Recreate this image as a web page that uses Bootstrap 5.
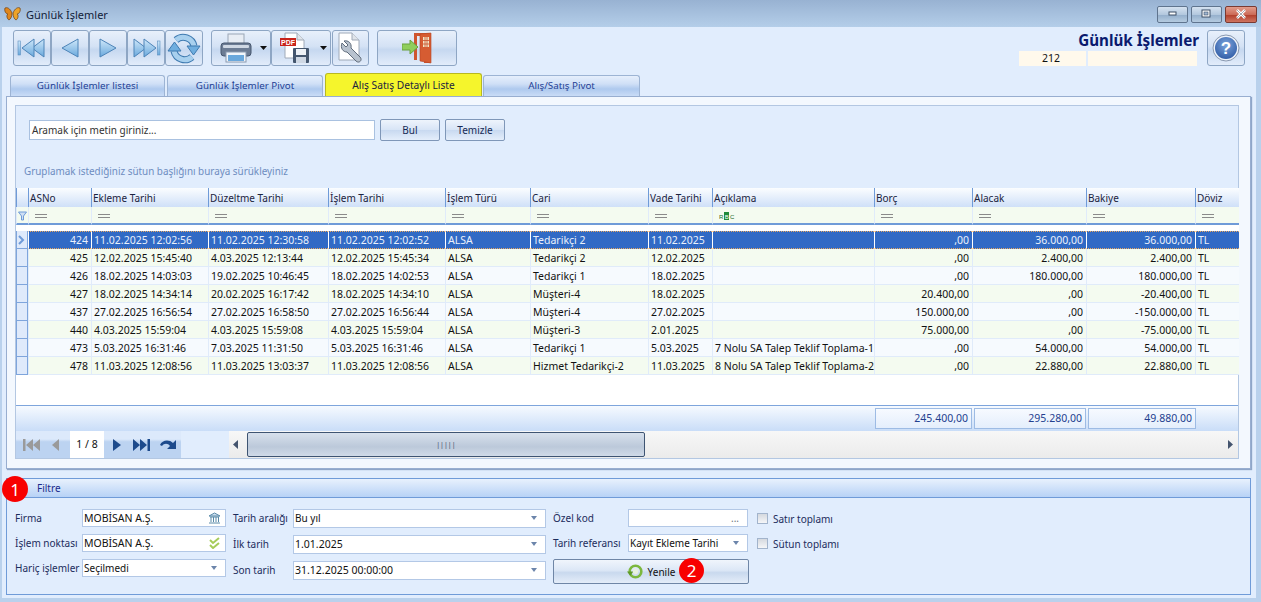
<!DOCTYPE html>
<html lang="tr">
<head>
<meta charset="utf-8">
<title>Günlük İşlemler</title>
<link href="https://cdn.jsdelivr.net/npm/bootstrap@5.3.0/dist/css/bootstrap.min.css" rel="stylesheet">
<style>
html,body{height:602px;overflow:hidden}
body{margin:0;background:#b9d1ec;font-family:"Noto Sans","DejaVu Sans",sans-serif;font-size:10px;line-height:1;color:#111}
.win{width:1261px;height:602px}
.ttl{height:27px;background:linear-gradient(#98b2d2,#b4cee9);padding:1px 4px 0 4px}
.ttl-text{font-size:11px;color:#12223a;margin-left:5px}
.wbtn{width:31px;height:17px;border:1px solid #5f748e;border-radius:2px;background:linear-gradient(#d5e2f0 0,#b3c8de 50%,#93aecb 51%,#b5cbe0 100%);margin-left:3px}
.wclose{width:32px;background:linear-gradient(#e29c8c 0,#cc6c58 50%,#b03c28 51%,#cf7460 100%);border-color:#7a3a32}
.frame{margin:0 5px 4px 2px;height:571px;background:#e1edfd}
.tbar{height:46px;padding:3px 11px 0 11px}
.tb{height:36px;width:38px;border:1px solid #8ea6c4;border-radius:3px;background:linear-gradient(#e8f0fb 0,#d4e2f5 45%,#c6d8f0 55%,#e2ecfa 100%)}
.w60{width:60px}.w37{width:37px;margin-left:1px}.w80{width:80px}
.gap-l{margin-left:8px}
.headbox{width:180px;margin-right:8px}
.head-title{font-size:15.2px;font-weight:700;color:#0a1a6e;height:21px;text-align:right}
.cream{height:15px;background:#fff9ec;color:#111;font-size:10.5px}
.cream1{width:67px;padding-left:23px;margin-right:2px}.cream2{width:109px}
.tabs{height:23px;padding-left:8px;align-items:flex-end}
.tabx{height:21px;width:156px;margin-right:2px;border:1px solid #9db4d4;border-bottom:0;border-radius:3px 3px 0 0;background:linear-gradient(#e6effc 0,#cfdff6 40%,#aec9ee 65%,#c9dcf6 100%);color:#1f3f95;font-size:9.8px}
.tab1{width:155px}
.tabon{height:23px;width:157px;margin-right:1px;background:#f5f52c;border-color:#b8b820;color:#1a2340;font-size:10.2px}
.tab4{width:157px}
.panel{margin-left:4px;width:1245px;height:373px;border:1px solid #98aed0;background:#f3f8fe;box-shadow:1px 1px 1px #8fa6c8;padding:8px 11px 9px 8px}
.inner{height:100%;border:1px solid #b3c7e2;background:#e1edfd}
.inner>*{flex-shrink:0}
.srch{height:46px;padding:14px 0 0 13px;gap:5px}
.sin{width:346px;height:20px;border:1px solid #a9c1e0;background:#fff;padding-left:2px;color:#333}
.sbtn{height:22px;width:60px;border:1px solid #7f97b8;border-radius:2px;background:linear-gradient(#eef4fc 0,#d7e4f6 50%,#c8d9f0 51%,#e4eefb 100%);color:#162a55;margin-top:-1px}
.hint{height:36px;padding:15px 0 0 8px;color:#6d8cc0;white-space:nowrap;font-size:9.9px}
table.gridt{table-layout:fixed;width:1223px;margin:0;border-collapse:separate;border-spacing:0;color:#111;--bs-table-bg:transparent;vertical-align:middle}
table.gridt>thead,table.gridt>tbody{vertical-align:middle}
table.gridt colgroup col:nth-child(1){width:12px}
table.gridt colgroup col:nth-child(2){width:63px}
table.gridt colgroup col:nth-child(3){width:117px}
table.gridt colgroup col:nth-child(4){width:120px}
table.gridt colgroup col:nth-child(5){width:117px}
table.gridt colgroup col:nth-child(6){width:85px}
table.gridt colgroup col:nth-child(7){width:118px}
table.gridt colgroup col:nth-child(8){width:64px}
table.gridt colgroup col:nth-child(9){width:162px}
table.gridt colgroup col:nth-child(10){width:98px}
table.gridt colgroup col:nth-child(11){width:114px}
table.gridt colgroup col:nth-child(12){width:109px}
table.gridt colgroup col:nth-child(13){width:44px}
.gridt th,.gridt td{padding:0 1px;border:0;box-shadow:none;white-space:nowrap;font-weight:400;background:transparent;vertical-align:middle}
.gridt thead tr.hd th{height:19px;background:linear-gradient(#fbfdff,#cfe0f8);border-left:1px solid #6f9bd8;color:#1a2340}
.gridt thead tr.fl td{height:18px;background:#f4fbf0;border-left:1px solid #e0ebfa;border-bottom:2px solid #6f9bd8;padding-left:6px}
.gridt tr.sp td{height:6px;background:#fff;padding:0;border-bottom:0}
.gridt tbody tr td{height:18px;border-left:1px solid #e0ebfa;border-bottom:1px solid #e0ebfa;padding:1px 3px 0 2px;font-size:10.5px}
.gridt tbody tr.ga td{background:#f4fbf0}
.gridt tbody tr.gb td{background:#f6fafe}
.gridt tbody tr td:first-child{background:#dfeafb;border:1px solid #7ea5dc;border-top:0;padding:0}
.gridt tbody tr.sel td{background:#316ac5;color:#eaf1fc;border-left-color:#fff;border-top:1px dotted #e8a860;border-bottom:1px dotted #e8a860}
.gridt tbody tr.sel td:first-child{background:#dfeafb;border:1px solid #7ea5dc;border-top:0}
.ra{text-align:right}
.eqx{display:inline-block;width:12px;height:4px;border-top:1px solid #8a8a8a;border-bottom:1px solid #8a8a8a;vertical-align:middle}
.blank{height:31px;background:#fff;border-bottom:1px solid #7ea5dc}
.totals{height:25px;background:linear-gradient(#f6faff,#c9ddf8);padding:2px 0 0 859px;gap:2px;font-size:10.5px}
.totc{height:21px;border:1px solid #9dbbe4;background:linear-gradient(#f7faff,#e4eefc);color:#23408f;padding:0 3px 0 0;justify-content:flex-end}
.tw1{width:97px}.tw2{width:112px}.tw3{width:108px}
.bnav{height:27px;background:#e1edfd}
.navl{width:165px;height:27px;background:linear-gradient(#dce9fb 0,#dce9fb 30%,#bcd3f1 40%,#bcd3f1 100%);padding-left:2px}
.pg{width:34px;height:27px;background:#fff;color:#111;font-size:10.5px}
.sbar{margin-left:48px;width:1010px;height:27px;background:linear-gradient(#f7f7f7,#ebebeb);padding:0 4px}
.thumb{width:398px;height:25px;margin-left:8px;border:1px solid #3e5472;border-radius:2px;background:linear-gradient(#d7e0ec,#bcc9da 60%,#d0dae8);color:#556}
.grip{font-size:7px;color:#3e4e66}
.filt{margin:9px 0 0 4px;width:1245px;height:117px;border:1px solid #6f9bd8;background:#e1edfd;position:relative}
.fhead{height:19px;background:linear-gradient(#e8f1fd,#b7d2f6);border-bottom:1px solid #6f9bd8;padding-left:30px;color:#1a2a8c}
.fbody{padding:11px 0 0 8px;color:#1c2c5c}
.fg{display:grid;align-items:center;row-gap:7px;grid-auto-rows:18px;white-space:nowrap}
.fg1{grid-template-columns:67px 144px;margin-right:7px}
.fg2{grid-template-columns:60px 253px;margin-right:7px;row-gap:8px}
.fg3{grid-template-columns:75px 120px;margin-right:9px}
.fin{height:18px;background:#fff;border:1px solid #b3c8e6;padding:0 4px 0 1px;color:#111}
.fg2 .fin{height:19px}
.wd{font-size:10.5px}
.arr{width:0;height:0;border-left:3px solid transparent;border-right:3px solid transparent;border-top:4px solid #6c85ab}
.ref{grid-column:1/3;align-self:start;height:25px;border:1px solid #6f86a6;border-radius:2px;background:linear-gradient(#f0f5fc 0,#dce7f6 45%,#c9d9ee 55%,#e4edf9 100%);color:#111;position:relative;width:196px}
.ck{width:11px;height:11px;border:1px solid #a2b4cc;background:linear-gradient(#d5d9df,#f5f6f8)}
.chkcol{margin-top:-3px}
.chk{gap:5px;height:25px;color:#1c2c5c}
.num{position:absolute;background:#f80000;color:#fff;border-radius:50%;display:flex;align-items:center;justify-content:center}
.n1{width:26px;height:26px;left:-5px;top:-3px;font-size:17px}
.n2{width:25px;height:25px;left:125px;top:-2px;font-size:17px}
</style>
</head>
<body>
<div class="win d-flex flex-column">
  <div class="ttl d-flex align-items-center">
    <svg width="17" height="16" viewBox="0 0 17 16"><path d="M8 7 C6 2 3 1 1 2 C0 5 2 8 4 8 C2 9 3 13 5 14 C7 13 8 10 8 7Z" fill="#e0861c" stroke="#6b3c10" stroke-width=".7"/><path d="M9 7 C11 2 14 1 16 2 C17 5 15 8 13 8 C15 9 14 13 12 14 C10 13 9 10 9 7Z" fill="#eda32a" stroke="#6b3c10" stroke-width=".7"/></svg>
    <span class="ttl-text">Günlük İşlemler</span>
    <div class="ms-auto d-flex align-items-center">
      <div class="wbtn d-flex align-items-center justify-content-center"><svg width="10" height="6"><rect x="1" y="1" width="7" height="3" fill="#fff" stroke="#3d4f66"/></svg></div>
      <div class="wbtn d-flex align-items-center justify-content-center"><svg width="11" height="10"><rect x="1" y="1" width="8" height="7" fill="#fff" stroke="#3d4f66"/><rect x="3" y="3" width="4" height="3" fill="#9db4d0" stroke="#3d4f66" stroke-width=".6"/></svg></div>
      <div class="wbtn wclose d-flex align-items-center justify-content-center"><svg width="12" height="10"><path d="M2 1 L10 9 M10 1 L2 9" stroke="#fff" stroke-width="2.6"/><path d="M2 1 L10 9 M10 1 L2 9" stroke="#4a5560" stroke-width=".5"/></svg></div>
    </div>
  </div>
  <div class="frame">
    <div class="tbar d-flex">
      <div class="d-flex">
        <div class="tb d-flex align-items-center justify-content-center"><svg width="30" height="24" viewBox="0 0 30 24"><defs><linearGradient id="bg" x1="0" y1="0" x2="0" y2="1"><stop offset="0" stop-color="#d0e8fa"/><stop offset="1" stop-color="#69a8dc"/></linearGradient></defs><rect x="1" y="5" width="2.500" height="14" fill="url(#bg)" stroke="#5d8fc0" stroke-width=".6"/><path d="M27 3 V21 L15 12Z" fill="url(#bg)" stroke="#4d84b8"/><path d="M17 3 V21 L5 12Z" fill="url(#bg)" stroke="#4d84b8"/></svg></div>
        <div class="tb d-flex align-items-center justify-content-center"><svg width="22" height="22" viewBox="0 0 22 22"><path d="M19 2 V20 L3 11Z" fill="url(#bg)" stroke="#4d84b8"/></svg></div>
        <div class="tb d-flex align-items-center justify-content-center"><svg width="22" height="22" viewBox="0 0 22 22"><path d="M3 2 V20 L19 11Z" fill="url(#bg)" stroke="#4d84b8"/></svg></div>
        <div class="tb d-flex align-items-center justify-content-center"><svg width="30" height="24" viewBox="0 0 30 24"><path d="M3 3 V21 L15 12Z" fill="url(#bg)" stroke="#4d84b8"/><path d="M13 3 V21 L25 12Z" fill="url(#bg)" stroke="#4d84b8"/><rect x="26.500" y="5" width="2.500" height="14" fill="url(#bg)" stroke="#5d8fc0" stroke-width=".6"/></svg></div>
        <div class="tb d-flex align-items-center justify-content-center"><svg width="34" height="31" viewBox="0 0 34 31"><path d="M9 7 A11 11 0 0 1 27 13" fill="none" stroke="#3e7ab0" stroke-width="7"/><path d="M9 7 A11 11 0 0 1 27 13" fill="none" stroke="#a8d0ee" stroke-width="5"/><path d="M25 24 A11 11 0 0 1 7 18" fill="none" stroke="#3e7ab0" stroke-width="7"/><path d="M25 24 A11 11 0 0 1 7 18" fill="none" stroke="#a8d0ee" stroke-width="5"/><path d="M20 13 H33 L26.500 22Z" fill="#6faedf" stroke="#3e7ab0"/><path d="M1 18 H14 L7.500 9Z" fill="#6faedf" stroke="#3e7ab0"/></svg></div>
      </div>
      <div class="d-flex gap-l">
        <div class="tb w60 d-flex align-items-center"><svg class="ms-2" width="32" height="30" viewBox="0 0 32 30"><rect x="8" y="1" width="16" height="10" fill="#e8edf4" stroke="#9aa6b6"/><rect x="1" y="10" width="30" height="13" rx="3" fill="#6c7c94" stroke="#46566e"/><rect x="3" y="12" width="26" height="3" rx="1" fill="#cfd8e4"/><rect x="6" y="19" width="20" height="10" fill="#f2f6fb" stroke="#8a9ab0"/><rect x="8" y="22" width="16" height="6" fill="#6aa8dc"/></svg><svg class="ms-2" width="7" height="4"><path d="M0 0 H7 L3.500 4Z" fill="#111"/></svg></div>
        <div class="tb w60 d-flex align-items-center"><svg class="ms-2" width="32" height="32" viewBox="0 0 32 32"><path d="M5 1 H17 L24 8 V26 H5Z" fill="#fff" stroke="#a0aab8"/><path d="M17 1 V8 H24" fill="#dfe4ea" stroke="#a0aab8"/><rect x="0" y="6" width="16" height="8" fill="#c8241c"/><text x="1" y="12.500" font-family="Liberation Sans" font-size="7" font-weight="700" fill="#fff">PDF</text><rect x="13" y="16" width="16" height="15" rx="1" fill="#44566e"/><rect x="16" y="17" width="10" height="6" fill="#eef2f7"/><rect x="16" y="25" width="10" height="6" fill="#cfd8e4"/></svg><svg class="ms-2" width="7" height="4"><path d="M0 0 H7 L3.500 4Z" fill="#111"/></svg></div>
        <div class="tb w37 d-flex align-items-center justify-content-center"><svg width="28" height="32" viewBox="0 0 28 32"><path d="M2 1 H15 L22 8 V28 H2Z" fill="#fff" stroke="#a0aab8"/><path d="M15 1 V8 H22" fill="#dfe4ea" stroke="#a0aab8"/><path d="M5 11 C3 16 6 20 10 20 L19 29 C22 32 26 28 23 25 L14 16 C15 11 11 8 7 9 L11 13 L9 15Z" fill="#b8c2ce" stroke="#5f6b7a"/></svg></div>
      </div>
      <div class="d-flex gap-l">
        <div class="tb w80 d-flex align-items-center justify-content-center"><svg width="30" height="32" viewBox="0 0 30 32"><path d="M12 1 H28 V31 H22 V4 H15 V28 H12Z" fill="#cf5530"/><path d="M18 2 L29 1 V31 L18 29Z" fill="#d65c32" stroke="#b54522" stroke-width=".6"/><rect x="21" y="5" width="6" height="10" fill="#f2e6c8"/><path d="M23 5V15M25 5V15M21 8.500H27M21 12H27" stroke="#c9502c" stroke-width=".8"/><path d="M0 12 H8 V8 L16 15 L8 22 V18 H0Z" fill="#8fce5c" stroke="#6aa23e"/></svg></div>
      </div>
      <div class="ms-auto d-flex">
        <div class="headbox d-flex flex-column">
          <div class="head-title d-flex align-items-center justify-content-end">Günlük İşlemler</div>
          <div class="d-flex">
            <div class="cream cream1 d-flex align-items-center">212</div>
            <div class="cream cream2"></div>
          </div>
        </div>
        <div class="tb d-flex align-items-center justify-content-center"><svg width="28" height="28" viewBox="0 0 28 28"><defs><radialGradient id="hb" cx=".5" cy=".35" r=".7"><stop offset="0" stop-color="#7aa4dc"/><stop offset="1" stop-color="#2f5aa4"/></radialGradient></defs><circle cx="14" cy="14" r="13" fill="#eef3fa" stroke="#8898b0"/><circle cx="14" cy="14" r="11" fill="url(#hb)"/><text x="14" y="20" text-anchor="middle" font-family="Liberation Sans" font-size="17" font-weight="700" fill="#fff">?</text></svg></div>
      </div>
    </div>
    <div class="tabs d-flex">
      <div class="tabx tab1 d-flex align-items-center justify-content-center">Günlük İşlemler listesi</div>
      <div class="tabx d-flex align-items-center justify-content-center">Günlük İşlemler Pivot</div>
      <div class="tabx tabon d-flex align-items-center justify-content-center">Alış Satış Detaylı Liste</div>
      <div class="tabx tab4 d-flex align-items-center justify-content-center">Alış/Satış Pivot</div>
    </div>
    <div class="panel">
      <div class="inner d-flex flex-column">
        <div class="srch d-flex">
          <div class="sin d-flex align-items-center">Aramak için metin giriniz...</div>
          <div class="sbtn d-flex align-items-center justify-content-center">Bul</div>
          <div class="sbtn d-flex align-items-center justify-content-center">Temizle</div>
        </div>
        <div class="hint">Gruplamak istediğiniz sütun başlığını buraya sürükleyiniz</div>
        <table class="table gridt">
          <colgroup><col><col><col><col><col><col><col><col><col><col><col><col><col></colgroup>
          <thead>
            <tr class="hd"><th></th><th>ASNo</th><th>Ekleme Tarihi</th><th>Düzeltme Tarihi</th><th>İşlem Tarihi</th><th>İşlem Türü</th><th>Cari</th><th>Vade Tarihi</th><th>Açıklama</th><th>Borç</th><th>Alacak</th><th>Bakiye</th><th>Döviz</th></tr>
            <tr class="fl"><td class="p-0 text-center"><svg width="9" height="10"><path d="M.5 1 H8.500 L5.500 5 V9 H3.500 V5Z" fill="#cfe0f4" stroke="#6f9bd8"/></svg></td><td><i class="eqx"></i></td><td><i class="eqx"></i></td><td><i class="eqx"></i></td><td><i class="eqx"></i></td><td><i class="eqx"></i></td><td><i class="eqx"></i></td><td><i class="eqx"></i></td><td><svg width="16" height="8"><text x="0" y="7" font-family="Liberation Sans" font-size="6" fill="#1a6a2a">R</text><rect x="5" y="0" width="5" height="8" fill="#1f8a3a"/><text x="5.800" y="6.800" font-family="Liberation Sans" font-size="6" fill="#fff">B</text><text x="11" y="7" font-family="Liberation Sans" font-size="6" fill="#1a6a2a">C</text></svg></td><td><i class="eqx"></i></td><td><i class="eqx"></i></td><td><i class="eqx"></i></td><td><i class="eqx"></i></td></tr>
            <tr class="sp"><td colspan="13"></td></tr>
          </thead>
          <tbody>
            <tr class="sel"><td class="text-center"><svg width="8" height="10"><path d="M1 1 L5 5 L1 9" fill="none" stroke="#6f9bd8" stroke-width="2"/></svg></td><td class="ra">424</td><td>11.02.2025 12:02:56</td><td>11.02.2025 12:30:58</td><td>11.02.2025 12:02:52</td><td>ALSA</td><td>Tedarikçi 2</td><td>11.02.2025</td><td></td><td class="ra">,00</td><td class="ra">36.000,00</td><td class="ra">36.000,00</td><td>TL</td></tr>
            <tr class="ga"><td></td><td class="ra">425</td><td>12.02.2025 15:45:40</td><td>4.03.2025 12:13:44</td><td>12.02.2025 15:45:34</td><td>ALSA</td><td>Tedarikçi 2</td><td>12.02.2025</td><td></td><td class="ra">,00</td><td class="ra">2.400,00</td><td class="ra">2.400,00</td><td>TL</td></tr>
            <tr class="gb"><td></td><td class="ra">426</td><td>18.02.2025 14:03:03</td><td>19.02.2025 10:46:45</td><td>18.02.2025 14:02:53</td><td>ALSA</td><td>Tedarikçi 1</td><td>18.02.2025</td><td></td><td class="ra">,00</td><td class="ra">180.000,00</td><td class="ra">180.000,00</td><td>TL</td></tr>
            <tr class="ga"><td></td><td class="ra">427</td><td>18.02.2025 14:34:14</td><td>20.02.2025 16:17:42</td><td>18.02.2025 14:34:10</td><td>ALSA</td><td>Müşteri-4</td><td>18.02.2025</td><td></td><td class="ra">20.400,00</td><td class="ra">,00</td><td class="ra">-20.400,00</td><td>TL</td></tr>
            <tr class="gb"><td></td><td class="ra">437</td><td>27.02.2025 16:56:54</td><td>27.02.2025 16:58:50</td><td>27.02.2025 16:56:44</td><td>ALSA</td><td>Müşteri-4</td><td>27.02.2025</td><td></td><td class="ra">150.000,00</td><td class="ra">,00</td><td class="ra">-150.000,00</td><td>TL</td></tr>
            <tr class="ga"><td></td><td class="ra">440</td><td>4.03.2025 15:59:04</td><td>4.03.2025 15:59:08</td><td>4.03.2025 15:59:04</td><td>ALSA</td><td>Müşteri-3</td><td>2.01.2025</td><td></td><td class="ra">75.000,00</td><td class="ra">,00</td><td class="ra">-75.000,00</td><td>TL</td></tr>
            <tr class="gb"><td></td><td class="ra">473</td><td>5.03.2025 16:31:46</td><td>7.03.2025 11:31:50</td><td>5.03.2025 16:31:46</td><td>ALSA</td><td>Tedarikçi 1</td><td>5.03.2025</td><td>7 Nolu SA Talep Teklif Toplama-1</td><td class="ra">,00</td><td class="ra">54.000,00</td><td class="ra">54.000,00</td><td>TL</td></tr>
            <tr class="ga"><td></td><td class="ra">478</td><td>11.03.2025 12:08:56</td><td>11.03.2025 13:03:37</td><td>11.03.2025 12:08:56</td><td>ALSA</td><td>Hizmet Tedarikçi-2</td><td>11.03.2025</td><td>8 Nolu SA Talep Teklif Toplama-2</td><td class="ra">,00</td><td class="ra">22.880,00</td><td class="ra">22.880,00</td><td>TL</td></tr>
          </tbody>
        </table>
        <div class="blank"></div>
        <div class="totals d-flex">
          <div class="totc tw1 d-flex align-items-center">245.400,00</div>
          <div class="totc tw2 d-flex align-items-center">295.280,00</div>
          <div class="totc tw3 d-flex align-items-center">49.880,00</div>
        </div>
        <div class="bnav d-flex">
          <div class="navl d-flex align-items-center">
            <svg class="ms-1" width="19" height="14" viewBox="0 0 19 14"><path d="M1 1H3.500V13H1Z M11 1V13L4 7Z M18 1V13L11 7Z" fill="#9a9a9a"/></svg>
            <svg class="ms-2" width="13" height="14" viewBox="0 0 13 14"><path d="M10 1V13L3 7Z" fill="#9a9a9a"/></svg>
            <div class="pg d-flex align-items-center justify-content-center ms-2">1 / 8</div>
            <svg class="ms-2" width="12" height="14" viewBox="0 0 12 14"><path d="M1 1V13L9 7Z" fill="#1c4a8c"/></svg>
            <svg class="ms-2" width="19" height="14" viewBox="0 0 19 14"><path d="M18 1H15.500V13H18Z M1 1V13L8 7Z M8 1V13L15 7Z" fill="#1c4a8c"/></svg>
            <svg class="ms-2" width="19" height="14" viewBox="0 0 19 14"><path d="M1 7 C3 2 10 1 14 5 L17 2 V11 H8 L11 8 C9 5 5 5 3 8Z" fill="#1c4a8c"/></svg>
          </div>
          <div class="sbar d-flex align-items-center">
            <svg width="6" height="9"><path d="M5 0V9L0 4.500Z" fill="#44546e"/></svg>
            <div class="thumb d-flex align-items-center justify-content-center"><span class="grip">|||||</span></div>
            <svg class="ms-auto" width="6" height="9"><path d="M0 0V9L5 4.500Z" fill="#44546e"/></svg>
          </div>
        </div>
      </div>
    </div>
    <div class="filt">
      <div class="fhead d-flex align-items-center">Filtre</div>
      <div class="num n1">1</div>
      <div class="fbody d-flex">
        <div class="fg fg1">
          <span>Firma</span><div class="fin wd d-flex align-items-center justify-content-between">MOBİSAN A.Ş.<svg width="13" height="12" viewBox="0 0 13 12"><path d="M1 4 L6.500 1 L12 4Z M2 5H11 M3 5V10 M5.500 5V10 M8 5V10 M10.500 5V10 M1 11H12" fill="#cfe0f0" stroke="#5a8aa8"/></svg></div>
          <span>İşlem noktası</span><div class="fin wd d-flex align-items-center justify-content-between">MOBİSAN A.Ş.<svg width="12" height="12" viewBox="0 0 12 12"><path d="M1 3 L4 6 L10 1 M1 8 L4 11 L10 6" fill="none" stroke="#a6cc5a" stroke-width="2"/></svg></div>
          <span>Hariç işlemler</span><div class="fin d-flex align-items-center justify-content-between">Seçilmedi<i class="arr me-1"></i></div>
        </div>
        <div class="fg fg2">
          <span>Tarih aralığı</span><div class="fin d-flex align-items-center justify-content-between">Bu yıl<i class="arr me-1"></i></div>
          <span>İlk tarih</span><div class="fin wd d-flex align-items-center justify-content-between">1.01.2025<i class="arr me-1"></i></div>
          <span>Son tarih</span><div class="fin wd d-flex align-items-center justify-content-between">31.12.2025 00:00:00<i class="arr me-1"></i></div>
        </div>
        <div class="fg fg3">
          <span>Özel kod</span><div class="fin d-flex align-items-center justify-content-end"><span class="me-1 text-secondary">...</span></div>
          <span>Tarih referansı</span><div class="fin d-flex align-items-center justify-content-between">Kayıt Ekleme Tarihi<i class="arr me-1"></i></div>
          <div class="ref d-flex align-items-center justify-content-center"><svg class="me-1" width="17" height="17" viewBox="0 0 16 16"><circle cx="8" cy="8" r="5.500" fill="none" stroke="#7cb83e" stroke-width="2.400"/><path d="M0 8 L6 8 L3 12Z" fill="#5e9a28"/><circle cx="8" cy="8" r="2.500" fill="#e8f2dc"/></svg><span>Yenile</span><div class="num n2">2</div></div>
        </div>
        <div class="chkcol d-flex flex-column">
          <div class="chk d-flex align-items-center"><i class="ck"></i>Satır toplamı</div>
          <div class="chk d-flex align-items-center"><i class="ck"></i>Sütun toplamı</div>
        </div>
      </div>
    </div>
  </div>
</div>
<script src="https://cdn.jsdelivr.net/npm/bootstrap@5.3.0/dist/js/bootstrap.bundle.min.js"></script>
</body>
</html>
